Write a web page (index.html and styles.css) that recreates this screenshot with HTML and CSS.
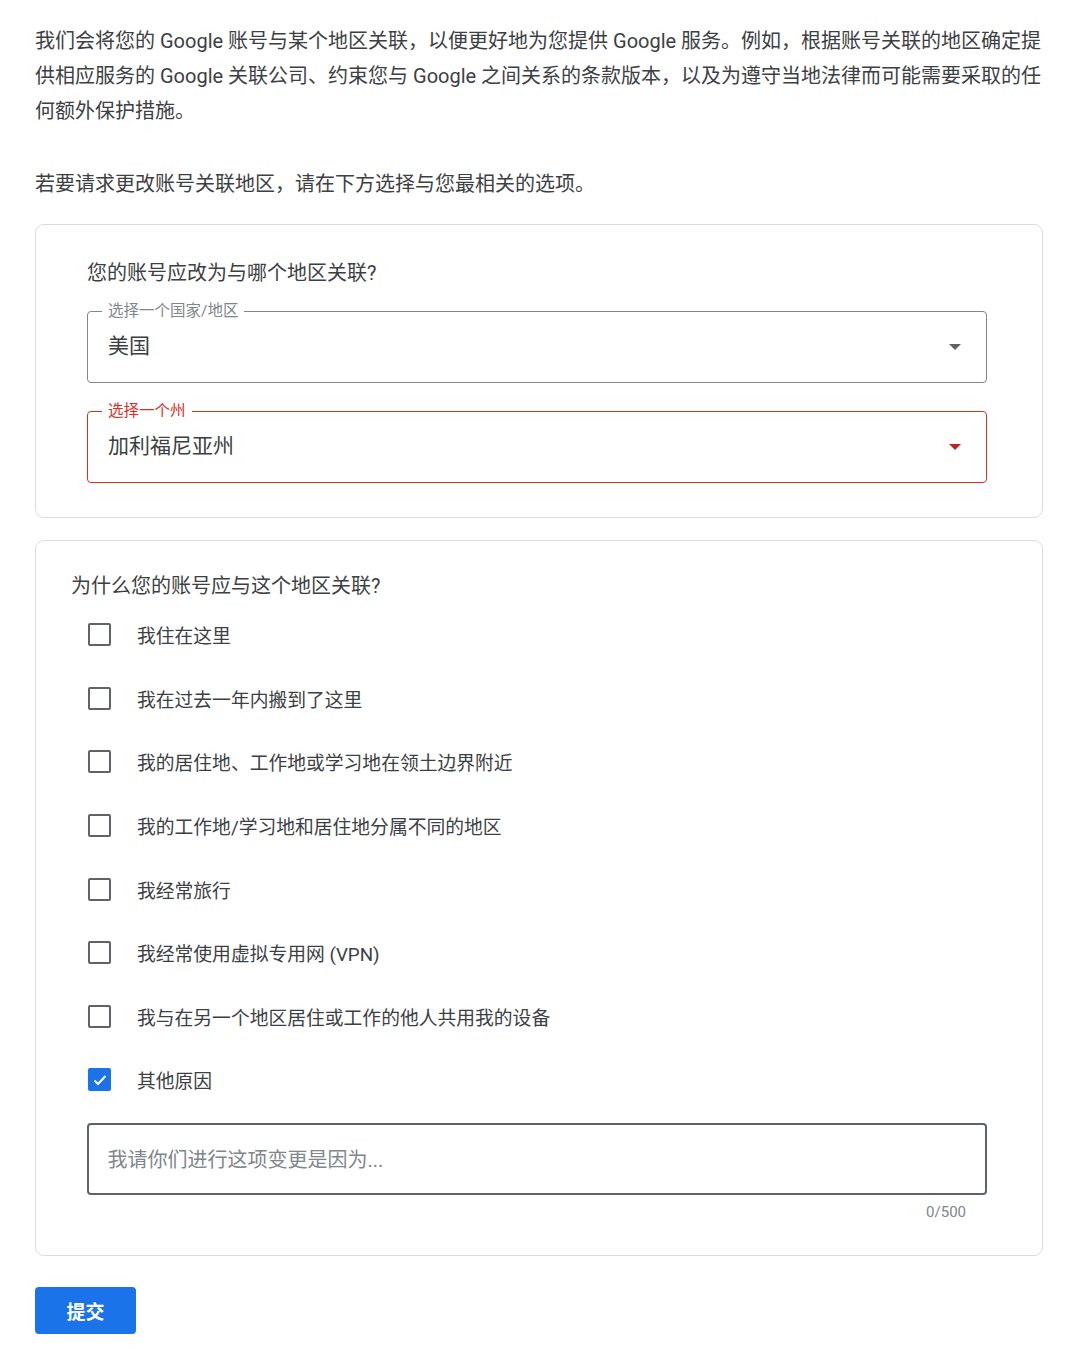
FILE: index.html
```html
<!DOCTYPE html>
<html lang="zh-CN">
<head>
<meta charset="utf-8">
<title>更改账号关联地区</title>
<link rel="stylesheet" href="styles.css">
</head>
<body>
<main class="page">
  <p class="intro">我们会将您的 Google 账号与某个地区关联，以便更好地为您提供 Google 服务。例如，根据账号关联的地区确定提供相应服务的 Google 关联公司、约束您与 Google 之间关系的条款版本，以及为遵守当地法律而可能需要采取的任何额外保护措施。</p>
  <p class="intro intro-2">若要请求更改账号关联地区，请在下方选择与您最相关的选项。</p>

  <section class="card card-region">
    <h2 class="card-title">您的账号应改为与哪个地区关联?</h2>
    <div class="select">
      <span class="select-label">选择一个国家/地区</span>
      <span class="select-value">美国</span>
      <svg class="select-arrow" width="12" height="6" viewBox="0 0 12 6"><path d="M0 0h12L6 6z"/></svg>
    </div>
    <div class="select select-error">
      <span class="select-label">选择一个州</span>
      <span class="select-value">加利福尼亚州</span>
      <svg class="select-arrow" width="12" height="6" viewBox="0 0 12 6"><path d="M0 0h12L6 6z"/></svg>
    </div>
  </section>

  <section class="card card-reason">
    <h2 class="card-title">为什么您的账号应与这个地区关联?</h2>
    <ul class="options">
      <li class="option"><span class="box"></span><span class="option-text">我住在这里</span></li>
      <li class="option"><span class="box"></span><span class="option-text">我在过去一年内搬到了这里</span></li>
      <li class="option"><span class="box"></span><span class="option-text">我的居住地、工作地或学习地在领土边界附近</span></li>
      <li class="option"><span class="box"></span><span class="option-text">我的工作地/学习地和居住地分属不同的地区</span></li>
      <li class="option"><span class="box"></span><span class="option-text">我经常旅行</span></li>
      <li class="option"><span class="box"></span><span class="option-text">我经常使用虚拟专用网 (VPN)</span></li>
      <li class="option"><span class="box"></span><span class="option-text">我与在另一个地区居住或工作的他人共用我的设备</span></li>
      <li class="option"><span class="box box-checked"><svg width="18" height="18" viewBox="0 0 18 18"><path d="M3.5 9.5l3.5 3.5 7.5-8" fill="none" stroke="#fff" stroke-width="2"/></svg></span><span class="option-text">其他原因</span></li>
    </ul>
    <div class="textarea">
      <span class="placeholder">我请你们进行这项变更是因为...</span>
    </div>
    <div class="counter">0/500</div>
  </section>

  <button class="submit" type="button">提交</button>
</main>
</body>
</html>
```

FILE: styles.css
```css
* { box-sizing: border-box; }
body {
  margin: 0;
  background: #fff;
  font-family: Roboto, "Noto Sans CJK SC", "Noto Sans", sans-serif;
  color: #3c4043;
}
.page {
  width: 1080px;
  padding: 24px 37px 0 35px;
}
.intro {
  margin: 0;
  font-size: 20px;
  line-height: 35px;
}
.intro-2 {
  margin-top: 38px;
}
.card {
  margin-top: 22px;
  border: 1.5px solid #dadce0;
  border-radius: 9px;
}
.card-region {
  padding: 34px 55px 34px 51px;
}
.card-title {
  margin: 0;
  font-size: 20px;
  font-weight: 400;
  line-height: 28px;
  color: #3c4043;
}
.select {
  position: relative;
  height: 72px;
  margin-top: 24px;
  border: 1.5px solid #80868b;
  border-radius: 4px;
  display: flex;
  align-items: center;
  padding: 0 25px 6px 20px;
}
.select + .select { margin-top: 28px; }
.select-label {
  position: absolute;
  left: 14px;
  top: -11px;
  padding: 0 6px;
  background: #fff;
  font-size: 15.5px;
  line-height: 20px;
  color: #80868b;
}
.select-value {
  flex: 1;
  font-size: 21px;
  color: #3c4043;
}
.select-arrow { fill: #5f6368; margin-top: 6px; }
.select-error { border-color: #d93025; }
.select-error .select-label { color: #d93025; }
.select-error .select-arrow { fill: #c5221f; }

.card-reason {
  padding: 31px 55px 32px 35px;
}
.options {
  list-style: none;
  margin: 3px 0 0;
  padding: 0 0 0 17px;
}
.option {
  height: 63.6px;
  display: flex;
  align-items: center;
}
.box {
  width: 23px;
  height: 23px;
  border: 2px solid #5f6368;
  border-radius: 2px;
  display: flex;
  align-items: center;
  justify-content: center;
}
.box-checked {
  background: #1a73e8;
  border-color: #1a73e8;
}
.option-text {
  margin-left: 26px;
  font-size: 18.8px;
  color: #3c4043;
}
.textarea {
  margin: 11px 0 0 15.5px;
  height: 72px;
  border: 2px solid #5f6368;
  border-radius: 4px;
  display: flex;
  align-items: center;
  padding: 0 0 0 19px;
}
.placeholder {
  font-size: 20px;
  color: #80868b;
}
.counter {
  text-align: right;
  padding-right: 21px;
  margin-top: 6px;
  font-size: 15px;
  line-height: 22px;
  color: #80868b;
}
.submit {
  margin-top: 31px;
  width: 101px;
  height: 47px;
  border: none;
  border-radius: 4px;
  background: #1a73e8;
  color: #fff;
  font-family: Roboto, "Noto Sans CJK SC", sans-serif;
  font-size: 19px;
  font-weight: 700;
}
```
